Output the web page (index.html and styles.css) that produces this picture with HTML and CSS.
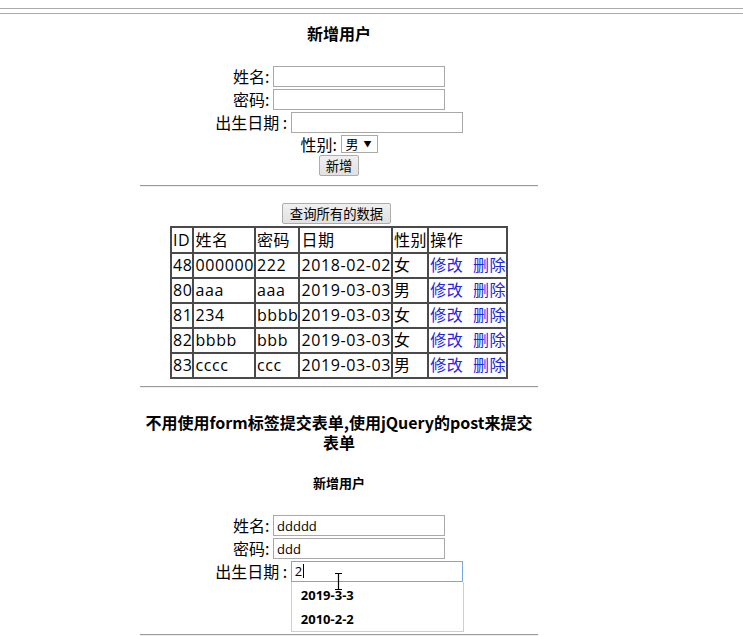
FILE: index.html
```html
<!DOCTYPE html>
<html lang="zh">
<head>
<meta charset="utf-8">
<title>用户管理</title>
<link rel="stylesheet" href="styles.css">
</head>
<body>
<div class="chrome">
  <div class="chrome-line"></div>
  <div class="chrome-line"></div>
</div>
<div class="page">
  <h4 class="title">新增用户</h4>
  <div class="form">
    <div class="row"><label>姓名:</label> <input class="field" type="text"></div>
    <div class="row"><label>密码:</label> <input class="field" type="text"></div>
    <div class="row"><label>出生日期 :</label> <input class="field" type="text"></div>
    <div class="row row-select"><label>性别:</label> <span class="select-wrap"><select class="select"><option>男</option><option>女</option></select></span></div>
    <div class="row"><button class="btn">新增</button></div>
  </div>
  <hr class="rule rule-1">
  <div class="query"><button class="btn btn-query">查询所有的数据</button></div>
  <table class="data">
    <tr><td>ID</td><td>姓名</td><td>密码</td><td>日期</td><td>性别</td><td>操作</td></tr>
    <tr><td>48</td><td>000000</td><td>222</td><td>2018-02-02</td><td>女</td><td><a href="#">修改</a>&nbsp;&nbsp;<a href="#">删除</a></td></tr>
    <tr><td>80</td><td>aaa</td><td>aaa</td><td>2019-03-03</td><td>男</td><td><a href="#">修改</a>&nbsp;&nbsp;<a href="#">删除</a></td></tr>
    <tr><td>81</td><td>234</td><td>bbbb</td><td>2019-03-03</td><td>女</td><td><a href="#">修改</a>&nbsp;&nbsp;<a href="#">删除</a></td></tr>
    <tr><td>82</td><td>bbbb</td><td>bbb</td><td>2019-03-03</td><td>女</td><td><a href="#">修改</a>&nbsp;&nbsp;<a href="#">删除</a></td></tr>
    <tr><td>83</td><td>cccc</td><td>ccc</td><td>2019-03-03</td><td>男</td><td><a href="#">修改</a>&nbsp;&nbsp;<a href="#">删除</a></td></tr>
  </table>
  <hr class="rule rule-2">
  <h4 class="title title-long">不用使用form标签提交表单,使用jQuery的post来提交表单</h4>
  <h5 class="subtitle">新增用户</h5>
  <div class="form form-2">
    <div class="row"><label>姓名:</label> <input class="field" type="text" value="ddddd"></div>
    <div class="row"><label>密码:</label> <input class="field" type="text" value="ddd"></div>
    <div class="row row-ac"><label>出生日期 :</label> <span class="ac-wrap"><span class="field field-focus">2<span class="caret"></span></span>
      <span class="ibeam"><svg width="9" height="17" viewBox="0 0 9 17"><path d="M1 0.5h7M4.5 0.5v16M1 16.5h7" stroke="#000" stroke-width="1.2" fill="none"/></svg></span>
      <span class="dropdown"><span class="opt">2019-3-3</span><span class="opt">2010-2-2</span></span></span></div>
  </div>
  <hr class="rule rule-3">
</div>
</body>
</html>
```
FILE: styles.css
```css
html, body {
  margin: 0;
  padding: 0;
  background: #fff;
}
body {
  font-family: "Noto Sans CJK SC", "Noto Sans", sans-serif;
  color: #000;
  font-size: 16px;
  min-height: 636px;
}
.chrome {
  height: 14px;
  padding-top: 8px;
  box-sizing: border-box;
}
.chrome-line {
  height: 1px;
  background: #ababab;
  margin-bottom: 4px;
}
.page {
  width: 398px;
  margin-left: 140px;
  text-align: center;
}
.title {
  font-size: 16px;
  font-weight: bold;
  line-height: 20px;
  margin: 9px 0 23px;
}
.form .row {
  height: 23px;
  line-height: 21px;
  white-space: nowrap;
}
.form .row label {
  font-size: 16px;
  vertical-align: top;
}
.field {
  display: inline-block;
  box-sizing: border-box;
  width: 172px;
  height: 21px;
  border: 1px solid #a9a9a9;
  padding: 0 3px;
  font-family: "Open Sans", "Noto Sans CJK SC", sans-serif;
  font-size: 13px;
  line-height: 19px;
  text-align: left;
  vertical-align: top;
  margin: 0;
  outline: none;
  color: #000;
}
.row-select {
  height: 20px !important;
  line-height: 18px !important;
}
.select-wrap {
  position: relative;
  display: inline-flex;
  vertical-align: top;
  height: 18px;
}
.select {
  -webkit-appearance: none;
  appearance: none;
  box-sizing: border-box;
  width: 37px;
  height: 18px;
  border: 1px solid #a9a9a9;
  background: #fff;
  padding: 0 0 0 4px;
  margin: 0;
  font-family: "Noto Sans CJK SC", sans-serif;
  font-size: 13px;
  line-height: 16px;
  border-radius: 0;
  color: #000;
}
.select-wrap::after {
  content: "▼";
  position: absolute;
  right: 6px;
  top: 0;
  font-size: 8px;
  line-height: 17px;
  pointer-events: none;
}
.btn {
  box-sizing: border-box;
  height: 21px;
  padding: 0 6px;
  border: 1px solid #adadad;
  border-radius: 2px;
  background: linear-gradient(#f0f0f0, #e1e1e1);
  font-family: "Noto Sans CJK SC", sans-serif;
  font-size: 13.33px;
  line-height: 19px;
  color: #000;
  vertical-align: top;
  margin: 0;
}
.btn-query {
  padding: 0 7px;
}
.rule {
  border: 0;
  border-top: 1px solid #9a9a9a;
  border-bottom: 1px solid #eeeeee;
  height: 0;
  margin: 0;
}
.rule-1 {
  margin-top: 7px;
}
.query {
  margin-top: 16px;
  height: 23px;
  padding-right: 5px;
}
.data {
  border-collapse: separate;
  border-spacing: 0;
  border: 1px solid #4a4a4a;
  margin: 0 auto;
  text-align: left;
  font-family: "Open Sans", "Noto Sans CJK SC", sans-serif;
  font-size: 16px;
  letter-spacing: 0.6px;
}
.data td {
  border: 1px solid #4a4a4a;
  padding: 1px 0 1px 1px;
  line-height: 21px;
  white-space: nowrap;
}
.data tr:first-child td {
  line-height: 22px;
}
.data a {
  color: #2323e6;
  text-decoration: none;
}
.rule-2 {
  margin-top: 7px;
}
.title-long {
  margin: 24px 0 0;
  padding: 0 2px;
}
.subtitle {
  font-size: 13px;
  font-weight: bold;
  line-height: 16px;
  margin: 23px 0 24px;
}
.row-ac {
  height: 73px !important;
}
.ac-wrap {
  position: relative;
  display: inline-block;
  vertical-align: top;
}
.field-focus {
  border-color: #7aa7e0;
  font-size: 13px;
}
.caret {
  display: inline-block;
  width: 1px;
  height: 14px;
  background: #000;
  vertical-align: -2px;
  margin-left: 1px;
}
.dropdown {
  position: absolute;
  left: 0;
  top: 21px;
  width: 173px;
  height: 50px;
  box-sizing: border-box;
  border: 1px solid #cfcfcf;
  border-top: 0;
  background: #fff;
  display: flex;
  flex-direction: column;
  padding: 1px 0 0 9px;
  text-align: left;
  z-index: 0;
}
.opt {
  flex: none;
  font-family: "Open Sans", "Noto Sans CJK SC", sans-serif;
  font-size: 13px;
  font-weight: bold;
  line-height: 24px;
  height: 24px;
}
.ibeam {
  position: absolute;
  left: 43px;
  top: 12px;
  line-height: 0;
  z-index: 1;
}
.rule-3 {
  margin-top: 0;
}
```
